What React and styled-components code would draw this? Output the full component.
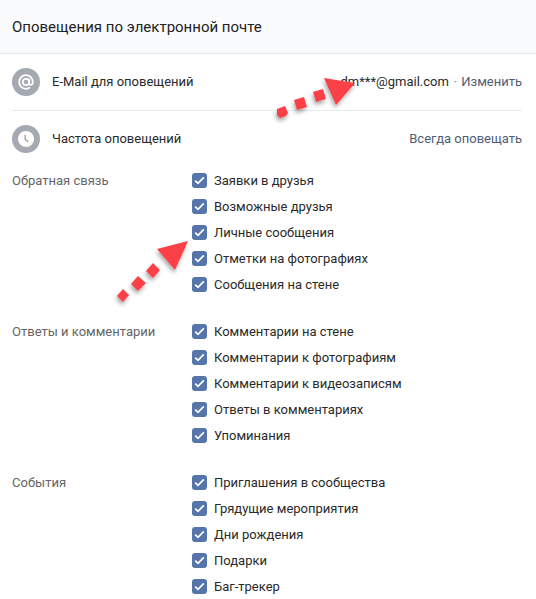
import React from "react";
import styled, { createGlobalStyle } from "styled-components";

const Global = createGlobalStyle`
  html, body {
    margin: 0;
    padding: 0;
    background: #fff;
  }
`;

const Page = styled.div`
  position: relative;
  width: 536px;
  height: 599px;
  overflow: hidden;
  background: #fff;
  font-family: Roboto, "Liberation Sans", sans-serif;
  font-size: 13px;
  color: #2a2a2a;
`;

const Header = styled.div`
  height: 53px;
  display: flex;
  align-items: center;
  padding: 0 12px;
  background: #fafbfd;
  border-bottom: 1px solid #e4e8f0;
  font-size: 15px;
  color: #222;
`;

const Body = styled.div`
  padding: 0 14px 0 12px;
`;

const InfoRow = styled.div`
  height: 56px;
  display: flex;
  align-items: center;
  gap: 12px;
  border-bottom: ${(props) => (props.$divided ? "1px solid #e9eaee" : "none")};
`;

const RoundIcon = styled.div`
  width: 28px;
  height: 28px;
  flex: none;
  display: flex;
  align-items: center;
  justify-content: center;
  border-radius: 50%;
  background: #a5a9b2;
  color: #fff;
`;

const RowLabel = styled.div`
  flex: 1;
  padding-bottom: 2px;
`;

const RowValue = styled.div`
  padding-bottom: 2px;
`;

const Email = styled.span`
  color: #2a2a2a;
`;

const Dot = styled.span`
  margin: 0 4px 0 5px;
  color: #828a99;
`;

const ActionLink = styled.span`
  color: #4f5d75;
`;

const Section = styled.div`
  display: grid;
  grid-template-columns: 180px 1fr;
  margin-bottom: 21px;
`;

const SectionTitle = styled.div`
  line-height: 28px;
  color: #656565;
`;

const Options = styled.div`
  display: flex;
  flex-direction: column;
`;

const Option = styled.div`
  height: 26px;
  display: flex;
  align-items: center;
  gap: 7px;
`;

const Box = styled.div`
  width: 15px;
  height: 15px;
  border-radius: 3px;
  background: #5675aa;
  display: flex;
  align-items: center;
  justify-content: center;
  flex: none;
`;

const Arrows = styled.svg`
  position: absolute;
  left: 0;
  top: 0;
  pointer-events: none;
`;

const sections = [
  {
    title: "Обратная связь",
    options: ["Заявки в друзья", "Возможные друзья", "Личные сообщения", "Отметки на фотографиях", "Сообщения на стене"],
  },
  {
    title: "Ответы и комментарии",
    options: ["Комментарии на стене", "Комментарии к фотографиям", "Комментарии к видеозаписям", "Ответы в комментариях", "Упоминания"],
  },
  {
    title: "События",
    options: ["Приглашения в сообщества", "Грядущие мероприятия", "Дни рождения", "Подарки", "Баг-трекер"],
  },
];

const Check = () => (
  <svg width="11" height="9" viewBox="0 0 11 9" fill="none">
    <path d="M1.2 4.6 L4 7.4 L9.8 1.4" stroke="#fff" strokeWidth="1.7" />
  </svg>
);

const Clock = () => (
  <svg width="18" height="18" viewBox="0 0 18 18">
    <circle cx="9" cy="9" r="8" fill="#fff" />
    <path d="M8.2 4.8 V9.4 L11.2 11.8" fill="none" stroke="#a5a9b2" strokeWidth="1.5" />
  </svg>
);

const At = () => (
  <svg width="18" height="18" viewBox="0 0 18 18" fill="none" stroke="#fff" strokeWidth="1.8">
    <circle cx="9" cy="9" r="3.2" />
    <path d="M12.2 5.6 V10.4 C12.2 12.6 15.8 12.6 15.8 9 C15.8 5 12.8 2.2 9 2.2 C5 2.2 2.2 5.2 2.2 9 C2.2 13 5 15.8 9 15.8 C10.6 15.8 11.8 15.4 13 14.6" />
  </svg>
);

const App = () => (
  <Page>
    <Global />
    <Header>Оповещения по электронной почте</Header>
    <Body>
      <InfoRow $divided>
        <RoundIcon>
          <At />
        </RoundIcon>
        <RowLabel>E-Mail для оповещений</RowLabel>
        <RowValue>
          <Email>dm***@gmail.com</Email>
          <Dot>·</Dot>
          <ActionLink>Изменить</ActionLink>
        </RowValue>
      </InfoRow>
      <InfoRow>
        <RoundIcon>
          <Clock />
        </RoundIcon>
        <RowLabel>Частота оповещений</RowLabel>
        <RowValue>
          <ActionLink>Всегда оповещать</ActionLink>
        </RowValue>
      </InfoRow>
      {sections.map((section) => (
        <Section key={section.title}>
          <SectionTitle>{section.title}</SectionTitle>
          <Options>
            {section.options.map((option) => (
              <Option key={option}>
                <Box>
                  <Check />
                </Box>
                {option}
              </Option>
            ))}
          </Options>
        </Section>
      ))}
    </Body>
    <Arrows width="536" height="599" viewBox="0 0 536 599">
      <defs>
        <filter id="soft" x="-30%" y="-30%" width="160%" height="160%">
          <feDropShadow dx="-1" dy="3" stdDeviation="2" floodColor="#000" floodOpacity="0.35" />
        </filter>
      </defs>
      <g fill="#fb3f47" filter="url(#soft)">
        <polygon points="324,78 355,83 336,105" />
        <polygon points="313,92 323,89 326,99 316,102" />
        <polygon points="294,100 304,97 307,107 297,110" />
        <polygon points="277,109 285,106 288,113 286,116 280,118 277,115" />
        <polygon points="157,249 188,241 175,270" />
        <polygon points="153,263 160,270 153,278 146,271" />
        <polygon points="138,276 146,283 138,291 131,284" />
        <polygon points="123,289 129,295 123,302 117,296" />
      </g>
    </Arrows>
  </Page>
);

export default App;
